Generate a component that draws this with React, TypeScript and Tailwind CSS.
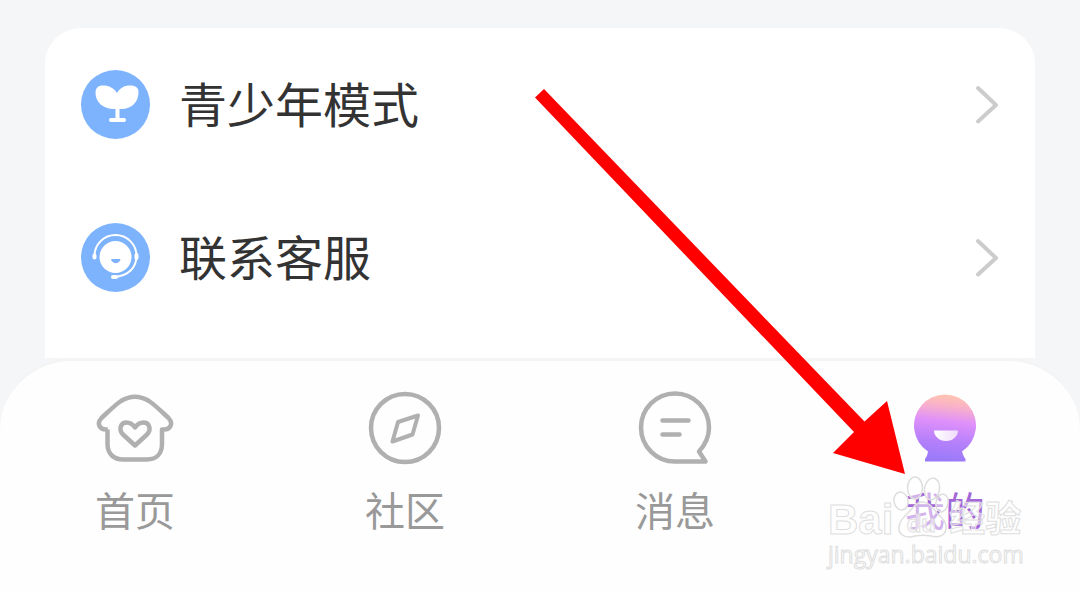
import type { ReactNode } from "react"

interface MenuItem {
    label: string;
    icon: ReactNode;
}

interface Tab {
    label: string;
    icon: ReactNode;
    active?: boolean;
}

function SproutIcon() {
    return (
        <svg width="70" height="70" viewBox="0 0 70 70" aria-hidden="true">
            <circle cx="34.500" cy="34.500" r="34.500" fill="#7db3fd" />
            <path
                d="M36 23C39 18 43 15.500 49 15.500C55 15.500 57.500 18 57.500 22C57.500 32 51 39 40 39H33C22 39 14.500 32 14.500 23C14.500 18 17 15.500 22 15.500C28 15.500 33 18 36 23Z"
                fill="#fff"
            />
            <path d="M36.500 38V49M30 50H43" stroke="#fff" strokeWidth="4" strokeLinecap="round" fill="none" />
        </svg>
    )
}

function SupportIcon() {
    return (
        <svg width="70" height="70" viewBox="0 0 70 70" aria-hidden="true">
            <circle cx="34.500" cy="34.500" r="34.500" fill="#7db3fd" />
            <circle cx="34.500" cy="34" r="16" fill="#fff" />
            <path d="M13.500 33A21 21 0 0 1 55.500 33C55.500 44 48 53 33 54" stroke="#fff" strokeWidth="2" fill="none" />
            <path d="M13.500 32.500V34.500M55.500 32V35M32 54H35" stroke="#fff" strokeWidth="4" strokeLinecap="round" />
            <path d="M30 36H39.500C39 41.500 30.500 41.500 30 36Z" fill="#7db3fd" />
        </svg>
    )
}

function HomeIcon() {
    return (
        <svg width="80" height="80" viewBox="0 0 80 80" fill="none" stroke="#b0b0b0" strokeWidth="4.500" strokeLinejoin="round" aria-hidden="true">
            <path d="M13 41.500C4 42.500 1.500 35 6.500 30C14 23 20 17 26 13C35 7.500 45 7.500 54 13C60 17 66 23 73.500 30C78.500 35 76 42.500 67 41.500V56C67 66 61 71.500 52 71.500H28C19 71.500 12.500 66 12.500 56V41.500" />
            <path d="M40 57.500L28 46.500C23 41 26 34.500 31.500 34.500C35 34.500 38 36.500 40 39.500C42 36.500 45 34.500 48.500 34.500C54 34.500 57 41 52 46.500Z" />
        </svg>
    )
}

function CompassIcon() {
    return (
        <svg width="80" height="80" viewBox="0 0 80 80" fill="none" stroke="#b0b0b0" strokeWidth="4.500" strokeLinejoin="round" aria-hidden="true">
            <circle cx="40" cy="40" r="34" />
            <path d="M53 27.500L47.500 46.500L27.500 53.500L33 34Z" strokeWidth="4" />
        </svg>
    )
}

function MessageIcon() {
    return (
        <svg width="80" height="80" viewBox="0 0 80 80" fill="none" stroke="#b0b0b0" strokeWidth="4.500" strokeLinecap="round" strokeLinejoin="round" aria-hidden="true">
            <path d="M40 73.500A34 34 0 1 1 74 39.500C74 48 70 57 64 63.500L70.500 73.500Z" />
            <path d="M27.500 32.500H53.500M27.500 46.500H44.500" />
        </svg>
    )
}

function ProfileIcon() {
    return (
        <svg width="80" height="80" viewBox="0 0 80 80" aria-hidden="true">
            <defs>
                <linearGradient id="profile" x1="0.550" y1="0" x2="0.450" y2="1">
                    <stop offset="0" stopColor="#ffc4b0" />
                    <stop offset="0.150" stopColor="#fbb4c5" />
                    <stop offset="0.400" stopColor="#df90fa" />
                    <stop offset="0.700" stopColor="#b680fb" />
                    <stop offset="1" stopColor="#987af9" />
                </linearGradient>
                <linearGradient id="smile" x1="0" y1="0" x2="1" y2="0">
                    <stop offset="0" stopColor="#fff" />
                    <stop offset="1" stopColor="#f0dcfb" />
                </linearGradient>
            </defs>
            <path d="M23 63.500A31 31 0 1 1 57 63.500C58 67 59 69 60.500 71V73.500H20V71C21.500 69 22.500 67 23 63.500Z" fill="url(#profile)" />
            <path d="M29 42.500H53C53 48 48 53 41 53C34 53 29 48 29 42.500Z" fill="url(#smile)" />
        </svg>
    )
}

function ChevronIcon() {
    return (
        <svg width="24" height="42" viewBox="0 0 24 42" fill="none" stroke="#ccc" strokeWidth="4" strokeLinecap="round" strokeLinejoin="round" aria-hidden="true">
            <path d="M3 4L21 21L3 37.500" />
        </svg>
    )
}

function PawIcon() {
    return (
        <svg width="56" height="64" viewBox="0 0 56 64" fill="#fff" fillOpacity="0.500" stroke="#dedede" strokeWidth="1.500" aria-hidden="true">
            <ellipse cx="8" cy="25" rx="7" ry="9" transform="rotate(-12 8 25)" />
            <ellipse cx="22" cy="12" rx="7.500" ry="11" />
            <ellipse cx="39" cy="13" rx="7.500" ry="11" transform="rotate(10 39 13)" />
            <ellipse cx="49" cy="27" rx="6" ry="9" transform="rotate(12 49 27)" />
            <path d="M29 26C23 26 20 32 15 37C9 42 5 47 6 54C8 61 15 62 22 60C27 59 33 59 38 60C45 62 52 60 53 53C54 46 49 42 43 36C39 31 36 26 29 26Z" />
        </svg>
    )
}

const menuItems: MenuItem[] = [
    { label: "青少年模式", icon: <SproutIcon /> },
    { label: "联系客服", icon: <SupportIcon /> },
]

const tabs: Tab[] = [
    { label: "首页", icon: <HomeIcon /> },
    { label: "社区", icon: <CompassIcon /> },
    { label: "消息", icon: <MessageIcon /> },
    { label: "我的", icon: <ProfileIcon />, active: true },
]

function Watermark() {
    return (
        <div className="pointer-events-none absolute right-[58px] bottom-6 w-[194px] text-white/50 select-none [-webkit-text-stroke:1px_#dedede]">
            <div className="flex h-16 items-end">
                <span className="text-[42px] leading-10 font-bold">Bai</span>
                <div className="relative">
                    <PawIcon />
                    <span className="absolute inset-x-0 bottom-1 text-center text-2xl leading-6 font-bold">du</span>
                </div>
                <span className="text-4xl leading-10 font-bold">经验</span>
            </div>
            <div className="font-['Open_Sans'] text-[23px] leading-7">jingyan.baidu.com</div>
        </div>
    )
}

function Arrow() {
    return (
        <svg className="pointer-events-none absolute top-[88px] left-[534px]" width="374" height="390" viewBox="534 88 374 390" aria-hidden="true">
            <path d="M544 89L864.500 421.500L887 401L905 474L833 453L854 432L535 97.500Z" fill="#fe0000" />
        </svg>
    )
}

export default function App() {
    return (
        <div className="relative flex min-h-screen flex-col overflow-hidden bg-[#f5f6f8] pt-7 font-['Liberation_Sans','Noto_Sans_CJK_SC',sans-serif]">
            <main className="mx-[45px] rounded-t-[36px] bg-white pb-6">
                {menuItems.map((item) => (
                    <button key={item.label} type="button" className="flex h-[153px] w-full items-center px-9 text-left">
                        {item.icon}
                        <span className="ml-7 flex-1 pt-1 text-5xl text-[#333]">{item.label}</span>
                        <ChevronIcon />
                    </button>
                ))}
            </main>

            <nav className="flex flex-1 items-start rounded-t-[72px] border-t-3 border-[#f4f4f5] bg-[#fefefe] pt-[27px]">
                {tabs.map((tab) => (
                    <a key={tab.label} href="#" className="flex flex-1 flex-col items-center">
                        {tab.icon}
                        <span className={`mt-3.5 text-[40px] leading-[60px] ${tab.active ? "text-[#a467d8]" : "text-[#999]"}`}>
                            {tab.label}
                        </span>
                    </a>
                ))}
            </nav>

            <Arrow />
            <Watermark />
        </div>
    )
}
